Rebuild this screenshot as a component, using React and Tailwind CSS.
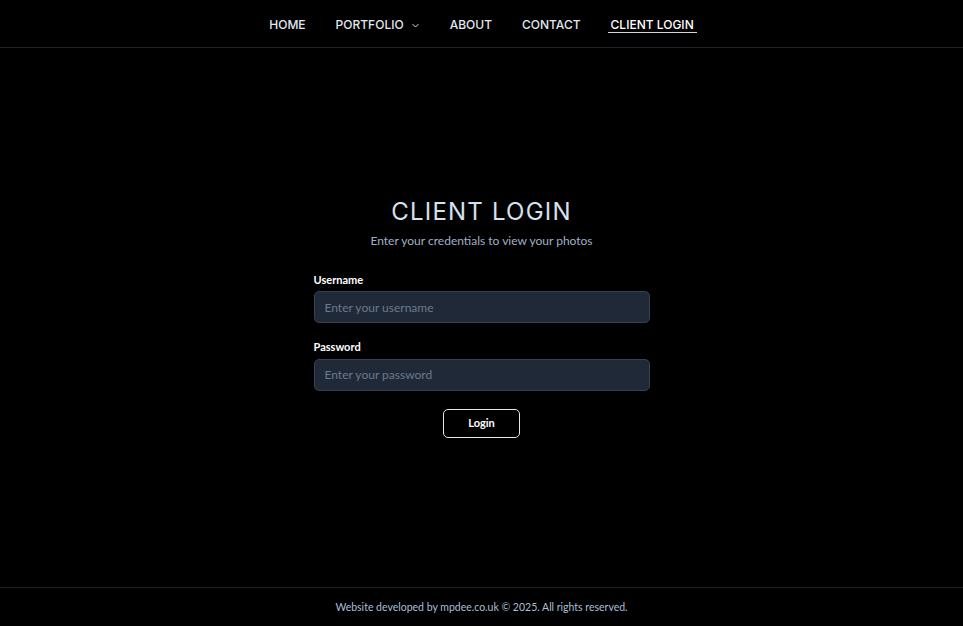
import React, { useState } from "react";

function Chevron() {
  return (
    <svg width="9" height="9" viewBox="0 0 24 24" fill="none" stroke="currentColor" strokeWidth="2.5" strokeLinecap="round" strokeLinejoin="round">
      <path d="M5 9l7 7 7-7" />
    </svg>
  );
}

export default function App() {
  let [username, setUsername] = useState("");
  let [password, setPassword] = useState("");

  const links = ["HOME", "PORTFOLIO", "ABOUT", "CONTACT"];

  return (
    <div className="min-h-screen flex flex-col bg-black" style={{ fontFamily: "Lato, 'Noto Sans', sans-serif" }}>
      <header className="h-12 border-b border-[#1f2329] flex items-center justify-center">
        <nav className="flex items-center gap-6 text-[12px] leading-[12px] font-medium text-[#e2e8f0] [font-family:Inter,sans-serif]">
          {links.map((l) => (
            <a key={l} href="#" className="px-[3px] flex items-center gap-[7px] pt-[5px] pb-[1px] border-b border-transparent">
              {l}
              {l === "PORTFOLIO" && <Chevron />}
            </a>
          ))}
          <a href="#" className="px-[3px] pt-[5px] pb-[1px] border-b border-[#d1d5db] text-white">
            CLIENT LOGIN
          </a>
        </nav>
      </header>

      <main className="flex-1 flex items-center justify-center pb-[2px]">
        <div className="w-[336px] flex flex-col items-center">
          <h1 className="text-[24px] tracking-[0.05em] text-[#d6e0ee] [font-family:Inter,sans-serif] font-normal leading-8">
            CLIENT LOGIN
          </h1>
          <p className="mt-[4px] text-[12px] text-[#9fb1c7]">Enter your credentials to view your photos</p>

          <form className="w-full mt-[22px]" onSubmit={(e) => e.preventDefault()}>
            <label htmlFor="username" className="block text-[11px] font-bold text-white mb-[3px]">
              Username
            </label>
            <input
              id="username"
              className="block w-full h-8 px-[10px] bg-[#1f2937] border border-[#374151] rounded-[5px] text-[12px] text-white placeholder-[#6b7a8f] focus:outline-none"
              placeholder="Enter your username"
              value={username}
              onChange={(e) => setUsername(e.target.value)}
            />
            <label htmlFor="password" className="block text-[11px] font-bold text-white mb-[3px] mt-4">
              Password
            </label>
            <input
              id="password"
              type="password"
              className="block w-full h-8 px-[10px] bg-[#1f2937] border border-[#374151] rounded-[5px] text-[12px] text-white placeholder-[#6b7a8f] focus:outline-none"
              placeholder="Enter your password"
              value={password}
              onChange={(e) => setPassword(e.target.value)}
            />
            <div className="flex justify-center mt-[18px]">
              <button type="submit" className="w-[77px] h-[29px] border border-[#e5e7eb] rounded-[5px] text-[11px] font-bold text-white">
                Login
              </button>
            </div>
          </form>
        </div>
      </main>

      <footer className="h-[39px] border-t border-[#1f2329] flex items-center justify-center">
        <p className="text-[10.5px] text-[#a9bfd6] pt-[1px]">Website developed by mpdee.co.uk © 2025. All rights reserved.</p>
      </footer>
    </div>
  );
}
